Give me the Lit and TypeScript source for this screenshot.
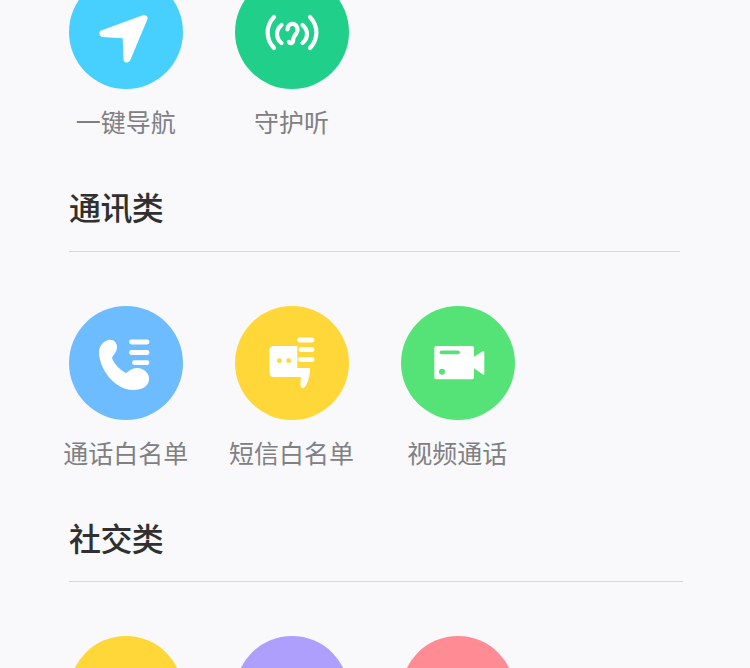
import { LitElement, html, css, svg } from "lit";
import { customElement } from "lit/decorators.js";

const icons = {
  nav: svg`<polygon class="w round" points="75,43.5 34,58.5 57,60 58,84"/>`,
  ear: svg`<g class="s">
    <path d="M39 42C30.5 51 30.5 64 39 73"/><path d="M75 42C83.5 51 83.5 64 75 73"/>
    <path d="M46.5 50C40.5 55 40.5 63 46.5 68"/><path d="M67.5 50C73.5 55 73.5 63 67.5 68"/>
    <path d="M52.5 54.5C52.5 47 62.5 47 62.5 55C62.5 60 58.2 60 58.2 64.5C58.2 68.5 55 69 54 67"/>
  </g>`,
  phone: svg`<path class="w" d="M37 35C42 32 48 35 48 41C48 46 44 49 43 52C45 58 51 64 57 67C60 65 63 62 68 62C75 62 81 68 80 74C79 81 72 84 64 84C46 84 30 63 30 46C30 41 33 37 37 35Z"/>
    <g class="s fat"><path d="M62.5 36H78"/><path d="M62.5 46.5H78"/><path d="M65.5 56.7H78"/></g>`,
  sms: svg`<path class="w" d="M39 40H62.3V62H75C75 70 73 77 70 81C68 83 65 82 65.5 78L66 71H39Q34.5 71 34.5 66.5V44.5Q34.5 40 39 40Z"/>
    <circle class="y" cx="44.3" cy="54.7" r="2.4"/><circle class="y" cx="53.7" cy="54.7" r="2.4"/>
    <g class="s fat"><path d="M64.5 34H77"/><path d="M66 43.5H77"/><path d="M65.5 53.5H77"/></g>`,
  video: svg`<rect class="w" x="33.3" y="40" width="39.7" height="33.3" rx="2"/>
    <path class="w" d="M73 50.7L82 45.2Q83.3 44.7 83.3 46V68Q83.3 69.4 82 68.6L73 62.3Z"/>
    <path class="g" d="M40.5 46.3H57"/><circle class="gf" cx="41" cy="65.7" r="3"/>`,
};

type Item = { label: string; color: string; icon?: keyof typeof icons };

const sections: { title?: string; line?: string; items: Item[] }[] = [
  { items: [
    { label: "一键导航", color: "blue", icon: "nav" },
    { label: "守护听", color: "teal", icon: "ear" },
  ] },
  { title: "通讯类", line: "short", items: [
    { label: "通话白名单", color: "sky", icon: "phone" },
    { label: "短信白名单", color: "yellow", icon: "sms" },
    { label: "视频通话", color: "green", icon: "video" },
  ] },
  { title: "社交类", line: "long", items: [
    { label: "", color: "yellow" },
    { label: "", color: "purple" },
    { label: "", color: "pink" },
  ] },
];

@customElement("app-root")
export class AppRoot extends LitElement {
  static styles = css`
    :host {
      display: block;
      width: 750px;
      height: 668px;
      overflow: hidden;
      background: #f9f9fb;
      font-family: "Noto Sans CJK SC", "Noto Sans", sans-serif;
    }
    .page {
      margin-top: -25px;
      padding-left: 69px;
    }
    .title {
      margin-top: 46px;
      height: 44px;
      line-height: 44px;
      font-size: 32px;
      font-weight: 500;
      letter-spacing: -0.6px;
      color: #303030;
    }
    .line {
      margin-bottom: 54px;
      height: 1px;
      background: #d8d8da;
    }
    .short { width: 611px; margin-top: 23px; }
    .long { width: 614px; margin-top: 22px; }
    .grid {
      display: grid;
      grid-template-columns: repeat(3, 114px);
      column-gap: 51.75px;
      margin-left: 0.3px;
    }
    .item {
      display: flex;
      flex-direction: column;
      align-items: center;
    }
    .circle {
      display: block;
      width: 114px;
      height: 114px;
      border-radius: 50%;
      flex: none;
    }
    .blue { background: #47cffd; }
    .teal { background: #1fcf8a; }
    .sky { background: #6dbcff; }
    .yellow { background: #ffd739; }
    .green { background: #55e378; }
    .purple { background: #ad9ffb; }
    .pink { background: #ff8b94; }
    .label {
      margin: 15px 1px 0 0;
      height: 34px;
      line-height: 34px;
      font-size: 25px;
      color: #808083;
      white-space: nowrap;
    }
    .w { fill: #fff; }
    .round { stroke: #fff; stroke-width: 7; stroke-linejoin: round; }
    .s { fill: none; stroke: #fff; stroke-width: 4.2; stroke-linecap: round; }
    .fat { stroke-width: 4.8; }
    .y { fill: #ffd739; }
    .g { fill: none; stroke: #55e378; stroke-width: 3.8; stroke-linecap: round; }
    .gf { fill: #55e378; }
  `;

  render() {
    return html`<div class="page">
      ${sections.map(
        (s) => html`
          ${s.title
            ? html`<div class="title">${s.title}</div><div class="line ${s.line}"></div>`
            : ""}
          <div class="grid">
            ${s.items.map(
              (it) => html`<div class="item">
                <svg class="circle ${it.color}" viewBox="0 0 114 114">
                  ${it.icon ? icons[it.icon] : ""}
                </svg>
                ${it.label ? html`<div class="label">${it.label}</div>` : ""}
              </div>`
            )}
          </div>
        `
      )}
    </div>`;
  }
}
